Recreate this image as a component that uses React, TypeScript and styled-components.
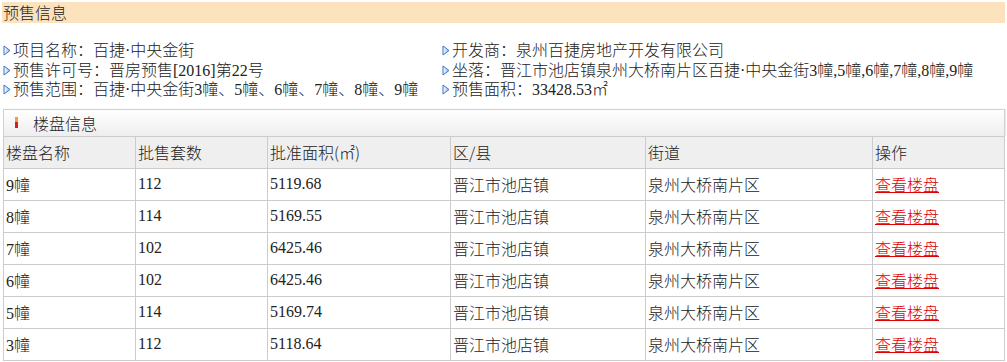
import React from "react";
import styled, { createGlobalStyle } from "styled-components";

const GlobalStyle = createGlobalStyle`
  html, body {
    margin: 0;
    padding: 0;
    background: #ffffff;
  }
  body {
    font-family: "Liberation Serif", "Noto Sans CJK SC", serif;
    font-size: 16px;
    font-weight: 300;
    color: #222222;
  }
`;

const info = {
  left: [
    "项目名称：百捷·中央金街",
    "预售许可号：晋房预售[2016]第22号",
    "预售范围：百捷·中央金街3幢、5幢、6幢、7幢、8幢、9幢",
  ],
  right: [
    "开发商：泉州百捷房地产开发有限公司",
    "坐落：晋江市池店镇泉州大桥南片区百捷·中央金街3幢,5幢,6幢,7幢,8幢,9幢",
    "预售面积：33428.53㎡",
  ],
};

const columns = [
  { title: "楼盘名称", width: 132 },
  { title: "批售套数", width: 132 },
  { title: "批准面积(㎡)", width: 183 },
  { title: "区/县", width: 195 },
  { title: "街道", width: 227 },
  { title: "操作", width: 132 },
];

const rows = [
  ["9幢", "112", "5119.68"],
  ["8幢", "114", "5169.55"],
  ["7幢", "102", "6425.46"],
  ["6幢", "102", "6425.46"],
  ["5幢", "114", "5169.74"],
  ["3幢", "112", "5118.64"],
];

function App() {
  return (
    <Page>
      <GlobalStyle />
      <TitleBar>预售信息</TitleBar>
      <InfoGrid>
        <InfoColumn>
          {info.left.map((t) => (
            <InfoItem key={t}>
              <Arrow />
              {t}
            </InfoItem>
          ))}
        </InfoColumn>
        <InfoColumn>
          {info.right.map((t) => (
            <InfoItem key={t}>
              <Arrow />
              {t}
            </InfoItem>
          ))}
        </InfoColumn>
      </InfoGrid>
      <Panel>
        <Marker />
        楼盘信息
      </Panel>
      <Table>
        <colgroup>
          {columns.map((c) => (
            <col key={c.title} style={{ width: c.width }} />
          ))}
        </colgroup>
        <thead>
          <tr>
            {columns.map((c) => (
              <Th key={c.title}>{c.title}</Th>
            ))}
          </tr>
        </thead>
        <tbody>
          {rows.map((r) => (
            <tr key={r[0]}>
              <Td>{r[0]}</Td>
              <Td>{r[1]}</Td>
              <Td>{r[2]}</Td>
              <Td>晋江市池店镇</Td>
              <Td>泉州大桥南片区</Td>
              <Td>
                <Link href="#">查看楼盘</Link>
              </Td>
            </tr>
          ))}
        </tbody>
      </Table>
    </Page>
  );
}

const Arrow = () => (
  <ArrowIcon width="8" height="11" viewBox="0 0 8 11">
    <defs>
      <linearGradient id="arrowFill" x1="0" y1="0" x2="1" y2="0">
        <stop offset="0" stopColor="#ffffff" />
        <stop offset="1" stopColor="#8fb8e8" />
      </linearGradient>
    </defs>
    <path d="M1 1 L7 5.5 L1 10 Z" fill="url(#arrowFill)" stroke="#3a73c4" strokeWidth="1" strokeLinejoin="round" />
  </ArrowIcon>
);

const Page = styled.div`
  width: 1003px;
  padding: 2px 0 0 2px;
`;

const TitleBar = styled.div`
  height: 21px;
  line-height: 21px;
  padding-left: 1px;
  background-color: #fde3bd;
  color: #222222;
  font-family: "Noto Sans CJK SC", sans-serif;
  font-size: 16px;
`;

const InfoGrid = styled.div`
  display: grid;
  grid-template-columns: 439px 1fr;
  padding: 18px 0 9px 1px;
`;

const InfoColumn = styled.div`
  display: flex;
  flex-direction: column;
`;

const InfoItem = styled.div`
  display: flex;
  align-items: center;
  height: 19.5px;
  line-height: 19.5px;
  white-space: nowrap;
  color: #222222;
`;

const ArrowIcon = styled.svg`
  flex: none;
  margin-right: 2px;
`;

const Panel = styled.div`
  display: flex;
  align-items: center;
  height: 26px;
  margin-left: 1px;
  border: 1px solid #d0d0d0;
  border-bottom: none;
  background: linear-gradient(#ffffff, #eeeeee);
  box-shadow: 1px 0 1px rgba(0, 0, 0, 0.08);
  color: #222222;
  font-family: "Noto Sans CJK SC", sans-serif;
  font-size: 16px;
`;

const Marker = styled.span`
  flex: none;
  width: 3px;
  height: 11px;
  margin: 0 15px 0 11px;
  background: linear-gradient(#f0a030 0, #f0a030 45%, #d42020 45%, #d42020 100%);
`;

const Table = styled.table`
  width: 1002px;
  margin-left: 1px;
  border-collapse: collapse;
  table-layout: fixed;
`;

const Th = styled.th`
  height: 31px;
  padding: 0 0 0 2px;
  border: 1px solid #cccccc;
  background-color: #efefef;
  font-weight: 300;
  text-align: left;
  color: #222222;
  font-family: "Noto Sans CJK SC", sans-serif;
`;

const Td = styled.td`
  height: 31px;
  padding: 0 0 0 2px;
  border: 1px solid #cccccc;
  text-align: left;
  white-space: nowrap;
  color: #222222;
`;

const Link = styled.a`
  color: #e00000;
  text-decoration: underline;
  font-family: "Noto Sans CJK SC", sans-serif;
`;

export default App;
